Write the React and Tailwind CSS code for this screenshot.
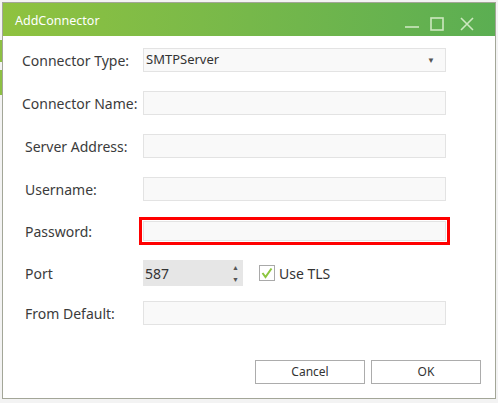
import { useState } from 'react';

const font = { fontFamily: '"Noto Sans", "Open Sans", "Liberation Sans", sans-serif' };

function Field({ className = '' }) {
  return <div className={`h-[24px] w-[303px] bg-[#f9f9f9] border border-[#e3e3e3] ${className}`} />;
}

function Row({ label, labelClass = 'pl-[22px]', className = '', children }) {
  return (
    <div className={`flex items-center ${className}`}>
      <div className={`w-[143px] shrink-0 text-[14px] text-[#3b3b3b] ${labelClass}`}>{label}</div>
      {children}
    </div>
  );
}

export default function App() {
  const [tls, setTls] = useState(true);

  return (
    <div className="relative w-[498px] h-[403px] bg-[#f3f3f3] overflow-hidden" style={font}>
      {/* bits of the app behind the dialog */}
      <div className="absolute left-0 top-[40px] w-[3px] h-[22px] bg-[#8dc043]" />
      <div className="absolute left-0 top-[70px] w-[3px] h-[25px] bg-[#8dc043]" />

      {/* window */}
      <div className="absolute left-[2px] top-[2px] w-[494px] h-[397px] border border-[#a3a698] bg-white flex flex-col">
        {/* title bar */}
        <div className="h-[33px] shrink-0 flex items-center bg-gradient-to-r from-[#8fc23f] to-[#5bae52] pl-[12px] pr-[20px]">
          <span className="text-[12.5px] text-white leading-none mt-[3px]">AddConnector</span>
          <div className="ml-auto flex items-center gap-[9px] mt-[8px]">
            <svg width="16" height="16" viewBox="0 0 16 16" className="mt-[2px]">
              <line x1="1" y1="10" x2="15" y2="10" stroke="#cde8c0" strokeWidth="1.6" />
            </svg>
            <svg width="16" height="16" viewBox="0 0 16 16">
              <rect x="2" y="2" width="12" height="12" fill="none" stroke="#cde8c0" strokeWidth="1.6" />
            </svg>
            <svg width="16" height="16" viewBox="0 0 16 16" className="ml-[5px]">
              <path d="M2 2 L14 14 M14 2 L2 14" stroke="#cde8c0" strokeWidth="1.6" />
            </svg>
          </div>
        </div>

        {/* form */}
        <div className="flex flex-col pt-[12px]" style={{ marginLeft: '-3px' }}>
          <Row label="Connector Type:" labelClass="pl-[22px]">
            <div className="h-[24px] w-[303px] bg-[#f9f9f9] border border-[#e3e3e3] flex items-center pl-[2px] pr-[10px] text-[13px] text-[#333]">
              SMTPServer
              <span className="ml-auto text-[8px] text-[#555]">▼</span>
            </div>
          </Row>
          <Row label="Connector Name:" labelClass="pl-[22px]" className="mt-[19px]">
            <Field />
          </Row>
          <Row label="Server Address:" labelClass="pl-[25px]" className="mt-[19px]">
            <Field />
          </Row>
          <Row label="Username:" labelClass="pl-[25px]" className="mt-[19px]">
            <Field />
          </Row>
          <Row label="Password:" labelClass="pl-[25px]" className="mt-[16px]">
            <div className="-ml-[4px] h-[28px] w-[311px] border-[3px] border-[#ff0000] p-[1px]">
              <div className="h-full w-full bg-[#f9f9f9] border border-[#e3e3e3]" />
            </div>
          </Row>
          <Row label="Port" labelClass="pl-[25px]" className="mt-[15px]">
            <div className="h-[26px] w-[100px] bg-[#e6e6e6] flex items-center pl-[2px] pr-[4px] text-[14px] text-[#333]">
              587
              <div className="ml-auto flex flex-col items-center leading-none text-[7px] text-[#555] gap-[5px]">
                <span>▲</span>
                <span>▼</span>
              </div>
            </div>
            <button
              type="button"
              onClick={() => setTls(!tls)}
              className="ml-[16px] flex items-center gap-[4px] text-[14px] text-[#333]"
            >
              <span className="w-[16px] h-[16px] border border-[#a9a9a9] bg-white flex items-center justify-center">
                {tls && (
                  <svg width="12" height="12" viewBox="0 0 12 12">
                    <path d="M1.5 6 L4.5 10 L10.5 1.5" fill="none" stroke="#8cc63f" strokeWidth="2" />
                  </svg>
                )}
              </span>
              Use TLS
            </button>
          </Row>
          <Row label="From Default:" labelClass="pl-[25px]" className="mt-[15px]">
            <Field />
          </Row>
        </div>

        {/* buttons */}
        <div className="mt-auto mb-[14px] flex justify-end gap-[6px] pr-[14px]">
          <button className="w-[110px] h-[24px] border border-[#acacac] bg-white text-[12px] text-[#333]">Cancel</button>
          <button className="w-[110px] h-[24px] border border-[#acacac] bg-white text-[12px] text-[#333]">OK</button>
        </div>
      </div>
    </div>
  );
}
